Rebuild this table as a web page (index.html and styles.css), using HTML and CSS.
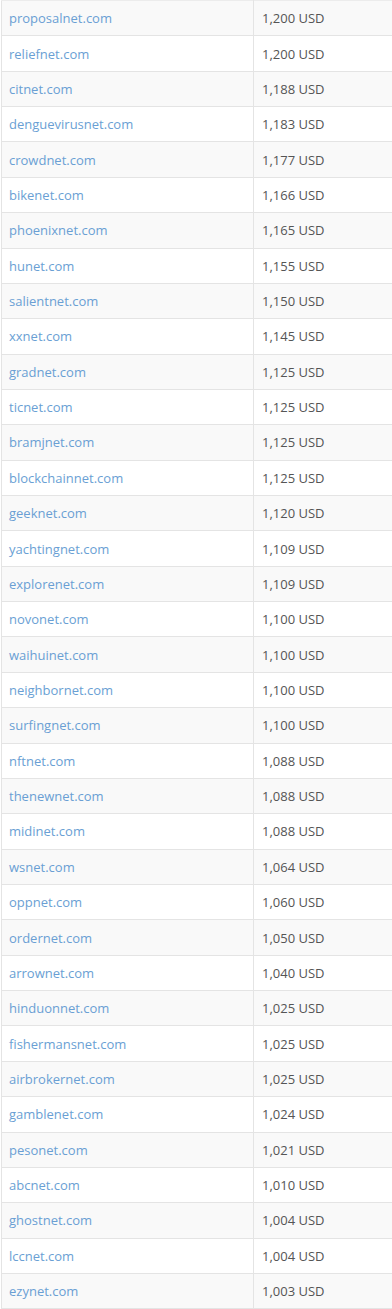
FILE: index.html
```html
<!DOCTYPE html>
<html>
<head>
<meta charset="utf-8">
<link rel="stylesheet" href="styles.css">
</head>
<body>
<div class="frame">
<table class="domains">
<tbody>
<tr><td class="name"><a href="#">proposalnet.com</a></td><td class="price">1,200 USD</td></tr>
<tr><td class="name"><a href="#">reliefnet.com</a></td><td class="price">1,200 USD</td></tr>
<tr><td class="name"><a href="#">citnet.com</a></td><td class="price">1,188 USD</td></tr>
<tr><td class="name"><a href="#">denguevirusnet.com</a></td><td class="price">1,183 USD</td></tr>
<tr><td class="name"><a href="#">crowdnet.com</a></td><td class="price">1,177 USD</td></tr>
<tr><td class="name"><a href="#">bikenet.com</a></td><td class="price">1,166 USD</td></tr>
<tr><td class="name"><a href="#">phoenixnet.com</a></td><td class="price">1,165 USD</td></tr>
<tr><td class="name"><a href="#">hunet.com</a></td><td class="price">1,155 USD</td></tr>
<tr><td class="name"><a href="#">salientnet.com</a></td><td class="price">1,150 USD</td></tr>
<tr><td class="name"><a href="#">xxnet.com</a></td><td class="price">1,145 USD</td></tr>
<tr><td class="name"><a href="#">gradnet.com</a></td><td class="price">1,125 USD</td></tr>
<tr><td class="name"><a href="#">ticnet.com</a></td><td class="price">1,125 USD</td></tr>
<tr><td class="name"><a href="#">bramjnet.com</a></td><td class="price">1,125 USD</td></tr>
<tr><td class="name"><a href="#">blockchainnet.com</a></td><td class="price">1,125 USD</td></tr>
<tr><td class="name"><a href="#">geeknet.com</a></td><td class="price">1,120 USD</td></tr>
<tr><td class="name"><a href="#">yachtingnet.com</a></td><td class="price">1,109 USD</td></tr>
<tr><td class="name"><a href="#">explorenet.com</a></td><td class="price">1,109 USD</td></tr>
<tr><td class="name"><a href="#">novonet.com</a></td><td class="price">1,100 USD</td></tr>
<tr><td class="name"><a href="#">waihuinet.com</a></td><td class="price">1,100 USD</td></tr>
<tr><td class="name"><a href="#">neighbornet.com</a></td><td class="price">1,100 USD</td></tr>
<tr><td class="name"><a href="#">surfingnet.com</a></td><td class="price">1,100 USD</td></tr>
<tr><td class="name"><a href="#">nftnet.com</a></td><td class="price">1,088 USD</td></tr>
<tr><td class="name"><a href="#">thenewnet.com</a></td><td class="price">1,088 USD</td></tr>
<tr><td class="name"><a href="#">midinet.com</a></td><td class="price">1,088 USD</td></tr>
<tr><td class="name"><a href="#">wsnet.com</a></td><td class="price">1,064 USD</td></tr>
<tr><td class="name"><a href="#">oppnet.com</a></td><td class="price">1,060 USD</td></tr>
<tr><td class="name"><a href="#">ordernet.com</a></td><td class="price">1,050 USD</td></tr>
<tr><td class="name"><a href="#">arrownet.com</a></td><td class="price">1,040 USD</td></tr>
<tr><td class="name"><a href="#">hinduonnet.com</a></td><td class="price">1,025 USD</td></tr>
<tr><td class="name"><a href="#">fishermansnet.com</a></td><td class="price">1,025 USD</td></tr>
<tr><td class="name"><a href="#">airbrokernet.com</a></td><td class="price">1,025 USD</td></tr>
<tr><td class="name"><a href="#">gamblenet.com</a></td><td class="price">1,024 USD</td></tr>
<tr><td class="name"><a href="#">pesonet.com</a></td><td class="price">1,021 USD</td></tr>
<tr><td class="name"><a href="#">abcnet.com</a></td><td class="price">1,010 USD</td></tr>
<tr><td class="name"><a href="#">ghostnet.com</a></td><td class="price">1,004 USD</td></tr>
<tr><td class="name"><a href="#">lccnet.com</a></td><td class="price">1,004 USD</td></tr>
<tr><td class="name"><a href="#">ezynet.com</a></td><td class="price">1,003 USD</td></tr>
</tbody>
</table>
</div>
</body>
</html>
```

FILE: styles.css
```css
html, body {
  margin: 0;
  padding: 0;
  background: #ffffff;
}
body {
  font-family: "Open Sans", "Liberation Sans", sans-serif;
  font-size: 13px;
}
.frame {
  width: 392px;
  overflow: hidden;
}
.domains {
  border-collapse: collapse;
  width: 420px;
  margin-left: 1px;
  table-layout: fixed;
}
.domains tr {
  height: 35.36px;
}
.domains tr:nth-child(odd) {
  background: #f9f9f9;
}
.domains td {
  border: 1px solid #e4e4e4;
  padding: 0 8px;
  vertical-align: middle;
  line-height: 18px;
}
.domains tr:first-child td {
  border-top: 1px solid #ececec;
}
.domains td.name {
  width: 236px;
  padding-left: 7px;
}
.domains td.name a {
  color: #6a9fd4;
  text-decoration: none;
}
.domains td.price {
  color: #555555;
}
```
